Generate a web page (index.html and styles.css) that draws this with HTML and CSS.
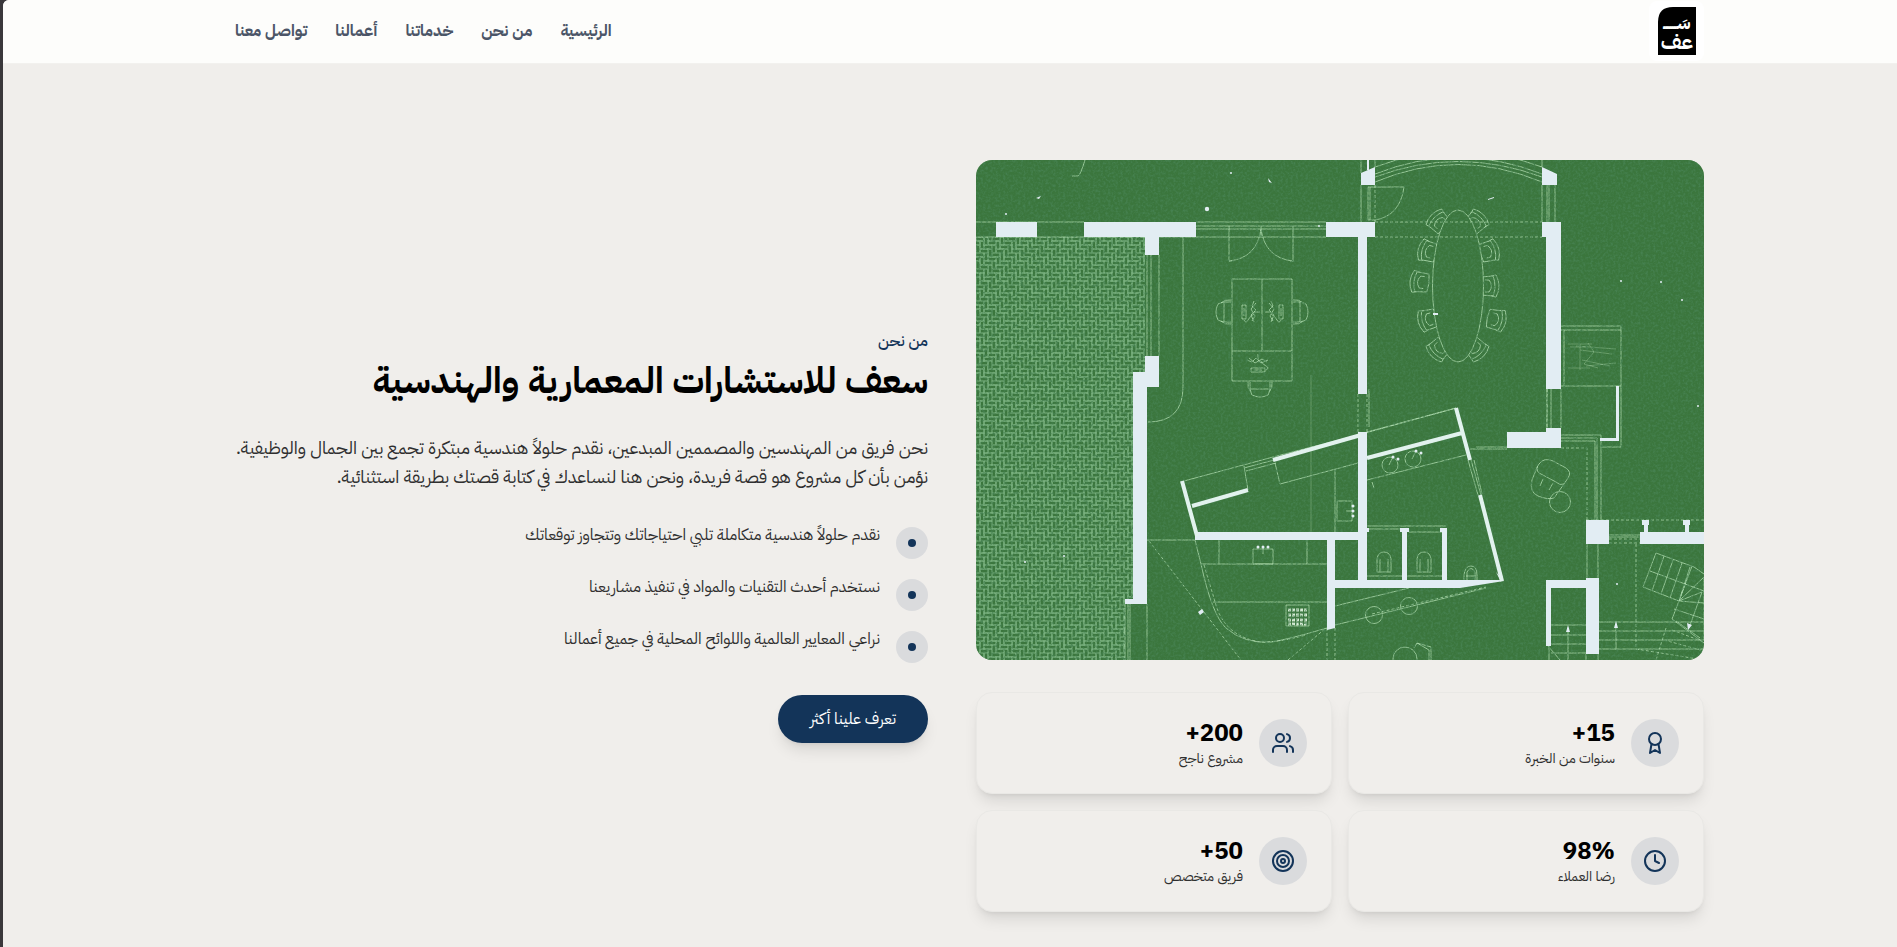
FILE: index.html
```
<!DOCTYPE html>
<html lang="ar" dir="rtl">
<head>
<meta charset="utf-8">
<meta name="viewport" content="width=device-width, initial-scale=1">
<title>سعف للاستشارات المعمارية والهندسية</title>
<link rel="stylesheet" href="styles.css">
</head>
<body>
<div class="page">
  <header class="header">
    <div class="container header-inner">
      <a class="logo" href="#" aria-label="سعف">
        <svg viewBox="0 0 55 60" aria-hidden="true">
          <path d="M9 54V21Q9 6 24 6H47V54Z" fill="#000"/>
          <text class="logo-text logo-top" x="28" y="28" direction="rtl">سَـــــــ</text>
          <text class="logo-text" x="28" y="48" direction="rtl">عف</text>
        </svg>
      </a>
      <nav class="nav">
        <a href="#">الرئيسية</a>
        <a href="#">من نحن</a>
        <a href="#">خدماتنا</a>
        <a href="#">أعمالنا</a>
        <a href="#">تواصل معنا</a>
      </nav>
    </div>
  </header>

  <main class="container about">
    <section class="media">
      <svg class="plan" viewBox="0 0 728 500" preserveAspectRatio="xMidYMid slice" role="img" aria-label="مخطط معماري">
        <defs>
          <filter id="grain" x="0" y="0" width="100%" height="100%">
            <feTurbulence type="fractalNoise" baseFrequency="0.4" numOctaves="4" seed="4"/>
            <feColorMatrix values="0 0 0 0 0.06  0 0 0 0 0.22  0 0 0 0 0.08  2.4 0 0 0 -0.98"/>
          </filter>
          <pattern id="brick" width="16" height="16" patternUnits="userSpaceOnUse" patternTransform="translate(0 77)">
            <g fill="none" stroke="#7ab280" stroke-width="1.1">
              <rect x="0" y="0" width="8" height="4"/><rect x="8" y="0" width="4" height="8"/>
              <rect x="-4" y="4" width="8" height="4"/><rect x="12" y="4" width="8" height="4"/><rect x="4" y="4" width="4" height="8"/>
              <rect x="8" y="8" width="8" height="4"/><rect x="0" y="8" width="4" height="8"/>
              <rect x="4" y="12" width="8" height="4"/><rect x="12" y="12" width="4" height="8"/><rect x="12" y="-4" width="4" height="8"/>
            </g>
          </pattern>
          <g id="chair">
            <path d="M-9-9L3-10Q7 0 3 10L-9 9Q-11 0-9-9"/>
            <path d="M1-10L6-11Q12 0 6 11L1 10M-5-6H-1Q4 0-1 6H-5"/>
          </g>
          <g id="desk-chair"><path d="M15-10H7L2-8Q-2 0 2 8L7 10H15M8-10V10M5-9Q9-13 15-12M5 9Q9 13 15 12"/></g>
          <g id="computer"><path d="M0-7H4V7H0ZM2-4V4M12-11L10-6L14-2L9 3L12 10M14-9L9-3L13 4L10 9M2 8Q4 12 6 8T12 2M12 0H18"/></g>
        </defs>

        <rect width="728" height="500" fill="#3b763d"/>
        <path d="M0 77H169V212H157V444H149V500H0Z" fill="url(#brick)"/>

        <g class="thin">
          <!-- upper walls and windows -->
          <path d="M0 62H61M0 77H169M61 62H108M220 62H350M220 66H350M220 69H350M183 77H350M171 95V196M175 95V196M183 95V196"/>
          <path d="M253 66V101Q281 98 285 69Q289 98 317 101V66M285 66V76M253 101H256M314 101H318"/>
          <path d="M207 77V227Q207 262 172 262"/>
          <path d="M109 0Q104 16 102 16H96"/>
          <!-- work desks -->
          <path d="M256 119H316V221H256ZM286 119V191M256 191H316"/>
          <use href="#desk-chair" x="240" y="152"/>
          <use href="#desk-chair" transform="translate(332 152) rotate(180)"/>
          <use href="#desk-chair" transform="translate(284 237) rotate(-90)"/>
          <use href="#computer" x="266" y="152"/>
          <use href="#computer" transform="translate(307 152) scale(-1 1)"/>
          <use href="#computer" transform="translate(282 212) rotate(-90)"/>
          <!-- meeting room -->
          <path d="M399 7Q482-24 566 7M399 14Q482-19 566 14M399 17Q482-14 566 17M399 22Q482-13 566 22M385 0V13M399 0V7M566 0V7"/>
          <path d="M392 27H428Q424 56 399 60H392ZM394 27V60M385 25V62M566 25V62M571 25V62M573 25V62M579 25V62"/>
          <use href="#chair" x="514" y="126"/>
          <use href="#chair" transform="translate(514 91) rotate(-15)"/>
          <use href="#chair" transform="translate(501 61) rotate(-45)"/>
          <use href="#chair" transform="translate(501 190) rotate(45)"/>
          <use href="#chair" transform="translate(451 91) rotate(195)"/>
          <use href="#chair" transform="translate(451 160) rotate(165)"/>
          <use href="#chair" transform="translate(462 61) rotate(225)"/>
          <use href="#chair" transform="translate(462 190) rotate(135)"/>
          <ellipse cx="482" cy="126" rx="25.5" ry="76" fill="#3b763d"/>
          <path class="dash" d="M399 62H566M399 77H566M399 25V62"/>
          <use href="#chair" transform="translate(521 160) rotate(12)"/>
          <use href="#chair" transform="translate(443 122) rotate(187)"/>
          <!-- right terrace -->
          <path d="M585 166H645V287H625M585 170H645M588 170V226M585 226H645M571 229V268M575 229V268M585 229V268"/>
          <path class="faint" d="M592 184H616M600 186L640 189M604 190L636 194M612 183L618 192L608 204L622 208M592 208H614M610 206L640 203M606 200L634 206M604 184V210M594 187H610"/>
          <path d="M585 275H625V360M585 278H621V360M585 281H619V360M500 287H531M494 289H531"/>
          <path class="dash" d="M571 229V268M585 288H611V360M391 234V272M382 234V272"/>
          <path d="M393 229V267"/>
          <!-- slanted room -->
          <path d="M208 321L297 297L382 275L480 248M268 306L272 330M268 308L298 300M270 311L300 303M299 303L304 324L382 303M391 320L490 295M391 272L480 248M492 300L502 335M495 300L505 335M498 300L506 334"/>
          <circle cx="414" cy="305" r="8"/><circle cx="437" cy="299" r="8"/>
          <path d="M413 305L417 297M436 299L440 291M396 322L398 328"/>
          <path d="M359 309V372M361 341H376V361H361ZM370 351H377"/>
          <path d="M391 366H470M391 369H424M433 372H466M391 416H426M431 416H466"/>
          <path d="M401 412V399Q402 392 408 392T415 399V412ZM404 412V399M412 412V399M441 412V399Q442 392 448 392T455 399V412ZM444 412V399M452 412V399"/>
          <path d="M488 420V415Q489 406 495 406T501 415V420M490 416H500M491 420V412Q495 405 499 412V420"/>
          <path d="M171 380H219L225 404Q236 455 250 468Q268 484 295 482Q310 480 351 468M225 404H351M243 380V404M331 380V404M237 442H351"/>
          <path class="dash" d="M173 381L265 500M228 405L240 445Q249 476 284 482Q300 483 330 475M312 500L350 468M351 468V500M359 468V500"/>
          <path d="M277 389H297V404H277ZM287 386V394M310 445H333V466H310Z"/>
          <path d="M335 215V372" class="faint"/>
          <path class="burners" d="M312 450H332M312 455H332M312 460H332M312 464H332"/>
          <!-- lounge -->
          <path d="M563 304Q568 297 577 301L590 308Q596 312 592 318L588 324Q584 326 580 322L563 313Q559 309 563 304ZM562 305L556 320Q553 332 562 336Q572 340 578 338L588 324M567 319L564 326M577 323L573 330"/>
          <circle cx="584" cy="342" r="10.5"/>
          <path d="M359 446L433 428M359 465L510 428"/>
          <path class="dash" d="M396 454L510 427"/>
          <circle cx="398" cy="455" r="8.5"/><circle cx="433" cy="446" r="8.5"/>
          <circle cx="429" cy="499" r="12"/><path d="M438 488L441 483L455 487V500M441 483L453 490V500"/>
          <!-- lower left opening -->
          <path d="M149 444V500M152 444V500M154 444V500M171 444V500"/>
          <!-- lower right stairs -->
          <path d="M633 375H664M633 377H664M611 384V418M622 384V418M575 465H610M575 475H610M575 484H610M575 493H610M592 500V467M572 486L584 500M573 486V500M610 494V500M622 494V500"/>
          <path d="M623 462H728M623 471H728M623 480H728M623 489H728M640 490V462M680 393L667 427L703 441L696 459L728 483M680 393L718 407L728 414M688 396L676 431M697 400L685 434M706 403L694 438M716 406L703 441L728 417M674 411L728 431M703 441L728 443M710 421L703 441L726 432L713 468M698 449L728 459M728 418V480M700 461L724 478M714 407L703 441"/>
          <path class="dash" d="M610 360H728M633 379H664M633 383H664M660 384V489L728 500M690 468L680 500M696 470L728 482M688 480L728 491"/>
        </g>

        <!-- paper grain under the solid walls -->
        <rect width="728" height="500" filter="url(#grain)"/>

        <g class="wall">
          <path d="M20 62H61V77H20ZM108 62H220V77H183V95H169V77H108ZM169 196H183V227H171V444H149V439H157V212H169Z"/>
          <path d="M350 62H399V77H391V234H382V77H350ZM385 13L399 7V25H385ZM391 0H393V10H391ZM566 7L581 14V25H566ZM566 62H585V229H570V77H566Z"/>
          <path d="M531 272H570V268H585V288H531ZM640 226H643V281H624V278H640Z"/>
          <path fill-rule="evenodd" d="M382 272H391V420H524L520 412L528 421L484 428H359V468L351 470V380H219V372H382ZM359 380H382V420H359Z"/>
          <path d="M426 372H424V368H433V372H431V420H426ZM466 372H464V368H471V420H466ZM391 368H393V372H391Z"/>
          <path d="M610 360H633V384H610ZM664 372H668V365H666V360H673V365H672V372H709V365H707V360H714V365H713V372H728V384H664Z"/>
          <path d="M570 420H610V418H623V494H610V428H575V486H570Z"/>
        </g>
        <path class="beam" d="M297 300L385 275M206 321L221 376M216 346L272 330M391 298L486 273M480 248L494 300M504 335L526 421"/>

        <g class="speck">
          <circle cx="231" cy="49" r="2.2"/><circle cx="30" cy="54" r="1"/><circle cx="255" cy="13" r="1"/>
          <path d="M292 18L296 23L293 22ZM60 38L65 36L63 39ZM512 39L518 37V38L512 40ZM457 153H462V155H457ZM222 452L226 449L228 452L224 455Z"/>
          <circle cx="645" cy="121" r="1"/><circle cx="685" cy="122" r="1"/><circle cx="706" cy="140" r="1"/><circle cx="722" cy="246" r="1"/>
          <circle cx="641" cy="424" r="1"/><circle cx="88" cy="396" r="1"/><circle cx="49" cy="402" r="1"/><circle cx="343" cy="66" r="1"/>
          <circle cx="282" cy="387" r="1.5"/><circle cx="287" cy="387" r="1.5"/><circle cx="292" cy="387" r="1.5"/>
          <circle cx="377" cy="346" r="1.5"/><circle cx="377" cy="351" r="1.5"/><circle cx="377" cy="356" r="1.5"/>
          <circle cx="417" cy="297" r="1.5"/><circle cx="422" cy="299" r="1.5"/><circle cx="440" cy="291" r="1.5"/><circle cx="445" cy="293" r="1.5"/>
          <path d="M590 472L592 465L594 472ZM638 468L640 461L642 468ZM711 463L712 470L716 465Z"/>
        </g>
      </svg>

      <ul class="stats">
        <li class="stat">
          <span class="stat-icon"><svg viewBox="0 0 24 24" aria-hidden="true"><circle cx="12" cy="8" r="6"/><path d="M15.477 12.89L17 22l-5-3-5 3 1.523-9.11"/></svg></span>
          <div><strong class="stat-value">15+</strong><span class="stat-label">سنوات من الخبرة</span></div>
        </li>
        <li class="stat">
          <span class="stat-icon"><svg viewBox="0 0 24 24" aria-hidden="true"><path d="M16 21v-2a4 4 0 0 0-4-4H6a4 4 0 0 0-4 4v2"/><circle cx="9" cy="7" r="4"/><path d="M22 21v-2a4 4 0 0 0-3-3.87M16 3.13a4 4 0 0 1 0 7.75"/></svg></span>
          <div><strong class="stat-value">200+</strong><span class="stat-label">مشروع ناجح</span></div>
        </li>
        <li class="stat">
          <span class="stat-icon"><svg viewBox="0 0 24 24" aria-hidden="true"><circle cx="12" cy="12" r="10"/><path d="M12 6v6l4 2"/></svg></span>
          <div><strong class="stat-value">98%</strong><span class="stat-label">رضا العملاء</span></div>
        </li>
        <li class="stat">
          <span class="stat-icon"><svg viewBox="0 0 24 24" aria-hidden="true"><circle cx="12" cy="12" r="10"/><circle cx="12" cy="12" r="6"/><circle cx="12" cy="12" r="2"/></svg></span>
          <div><strong class="stat-value">50+</strong><span class="stat-label">فريق متخصص</span></div>
        </li>
      </ul>
    </section>

    <section class="copy">
      <p class="eyebrow">من نحن</p>
      <h1 class="title">سعف للاستشارات المعمارية والهندسية</h1>
      <p class="lead">نحن فريق من المهندسين والمصممين المبدعين، نقدم حلولاً هندسية مبتكرة تجمع بين الجمال والوظيفية. نؤمن بأن كل مشروع هو قصة فريدة، ونحن هنا لنساعدك في كتابة قصتك بطريقة استثنائية.</p>
      <ul class="points">
        <li><span class="bullet"></span>نقدم حلولاً هندسية متكاملة تلبي احتياجاتك وتتجاوز توقعاتك</li>
        <li><span class="bullet"></span>نستخدم أحدث التقنيات والمواد في تنفيذ مشاريعنا</li>
        <li><span class="bullet"></span>نراعي المعايير العالمية واللوائح المحلية في جميع أعمالنا</li>
      </ul>
      <button class="cta" type="button">تعرف علينا أكثر</button>
    </section>
  </main>
</div>
</body>
</html>
```
FILE: styles.css
```
* {
  box-sizing: border-box;
}

body {
  margin: 0;
  padding-left: 3px;
  background: #3a383b;
  font-family: "IBM Plex Sans Arabic", "Noto Sans", sans-serif;
  font-size: 16px;
  line-height: 24px;
  color: #2f2f2f;
}

h1,
p,
ul {
  margin: 0;
  padding: 0;
}

ul {
  list-style: none;
}

.page {
  min-height: 100vh;
  padding-left: 4px;
  background: #f0eeeb;
  border-top-left-radius: 6px;
  overflow: hidden;
}

.container {
  max-width: 1536px;
  margin: 0 auto;
  padding: 0 16px;
}

.header {
  margin-left: -4px;
  padding-left: 4px;
  padding-bottom: 2px;
  background: #fdfdfb;
  border-bottom: 1px solid #f2f1ee;
}

.header-inner {
  display: flex;
  align-items: center;
  justify-content: space-between;
  height: 61px;
}

.logo {
  width: 55px;
  height: 60px;
  background: #fff;
  border-radius: 8px;
}

.logo svg {
  display: block;
  width: 100%;
  height: 100%;
}

.logo-text {
  font-size: 20px;
  font-weight: 700;
  fill: #fff;
  text-anchor: middle;
}

.logo-top {
  font-size: 18px;
}

.nav {
  display: flex;
  gap: 28px;
  padding-left: 35px;
}

.nav a {
  font-weight: 700;
  color: #4b5567;
  text-decoration: none;
}

.about {
  display: grid;
  grid-template-columns: 728fr 728fr;
  gap: 48px;
  align-items: center;
  padding-top: 96px;
  padding-bottom: 32px;
}

.plan {
  display: block;
  width: 100%;
  height: 500px;
  border-radius: 16px;
}

.thin {
  fill: none;
  stroke: #b4dfb4;
  stroke-width: 0.8;
}

.dash {
  stroke-dasharray: 3 2;
}

.faint {
  opacity: 0.5;
}

.burners {
  stroke: #d6ecd5;
  stroke-width: 3;
  stroke-dasharray: 3 1;
}

.wall,
.speck {
  fill: #e2edf3;
}

.beam {
  fill: none;
  stroke: #e2f2ee;
  stroke-width: 4;
}

.stats {
  display: grid;
  grid-template-columns: 1fr 1fr;
  gap: 16px;
  margin-top: 32px;
}

.stat {
  display: flex;
  align-items: center;
  gap: 16px;
  padding: 24px;
  background: #f0eeeb;
  border: 1px solid #e9e8e5;
  border-radius: 16px;
  box-shadow: 0 10px 15px -3px rgba(0, 0, 0, 0.1), 0 4px 6px -4px rgba(0, 0, 0, 0.1);
}

.stat-icon {
  display: flex;
  align-items: center;
  justify-content: center;
  width: 48px;
  height: 48px;
  background: #dadbdd;
  border-radius: 50%;
}

.stat-icon svg {
  width: 24px;
  height: 24px;
  fill: none;
  stroke: #133459;
  stroke-width: 2;
  stroke-linecap: round;
  stroke-linejoin: round;
}

.stat-value,
.stat-label {
  display: block;
}

.stat-value {
  font-size: 24px;
  font-weight: 700;
  line-height: 32px;
  color: #000;
}

.stat-label {
  font-size: 14px;
  line-height: 20px;
}

.eyebrow {
  font-weight: 500;
  color: #133459;
}

.title {
  margin-top: 8px;
  font-size: 36px;
  font-weight: 700;
  line-height: 40px;
  color: #000;
}

.lead {
  margin-top: 32px;
  font-size: 18px;
  line-height: 29px;
}

.points {
  display: grid;
  gap: 16px;
  margin-top: 32px;
}

.points li {
  display: flex;
  gap: 16px;
}

.bullet {
  display: flex;
  align-items: center;
  justify-content: center;
  flex: none;
  width: 32px;
  height: 32px;
  margin-top: 4px;
  background: #dadbdd;
  border-radius: 50%;
}

.bullet::before {
  content: "";
  width: 8px;
  height: 8px;
  background: #133459;
  border-radius: 50%;
}

.cta {
  height: 48px;
  margin-top: 32px;
  padding: 0 32px;
  font: inherit;
  color: #fff;
  background: #133459;
  border: 0;
  border-radius: 24px;
  box-shadow: 0 10px 15px -3px rgba(0, 0, 0, 0.1), 0 4px 6px -4px rgba(0, 0, 0, 0.1);
}
```
